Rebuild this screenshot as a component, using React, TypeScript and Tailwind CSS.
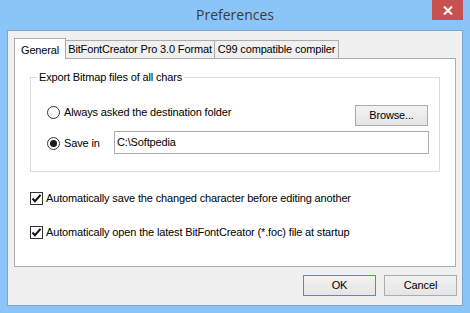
import React from "react";

const font = { fontFamily: "'Liberation Sans', Arial, sans-serif" };

function Radio({ checked }: { checked?: boolean }) {
  return (
    <span className="w-[13px] h-[13px] rounded-full border border-[#333] bg-white flex items-center justify-center shrink-0">
      {checked && <span className="w-[7px] h-[7px] rounded-full bg-[#1a1a1a]" />}
    </span>
  );
}

function Check() {
  return (
    <span className="w-[13px] h-[13px] border border-[#333] bg-white flex items-center justify-center shrink-0">
      <svg width="11" height="11" viewBox="0 0 11 11">
        <path d="M1.5 5.5 L4 8.2 L9.5 1.8" stroke="#111" strokeWidth="2" fill="none" />
      </svg>
    </span>
  );
}

function Btn({ children, def }: { children: React.ReactNode; def?: boolean }) {
  return (
    <div
      className={
        "w-[73px] h-[21px] flex items-center justify-center text-black bg-gradient-to-b from-[#f2f2f2] to-[#e5e5e5] border whitespace-nowrap " +
        (def ? "border-[#3c91e6]" : "border-[#acacac]")
      }
    >
      {children}
    </div>
  );
}

export default function App() {
  return (
    <div className="w-[470px] h-[313px] bg-[#8bc4f6] flex flex-col text-[11px] tracking-[-0.15px]" style={font}>
      <div className="h-[30px] relative flex items-center justify-center shrink-0">
        <span className="text-[14px] tracking-normal text-[#3b3b3b] pb-[2px]" style={{ fontFamily: "'Open Sans', 'Noto Sans', sans-serif" }}>Preferences</span>
        <div className="absolute top-0 right-[7px] w-[31px] h-[20px] bg-[#c75050] flex items-center justify-center">
          <svg width="10" height="9" viewBox="0 0 10 9">
            <path d="M1 0.5 L9 8.5 M9 0.5 L1 8.5" stroke="#fff" strokeWidth="2" />
          </svg>
        </div>
      </div>
      <div className="mx-[7px] mb-[7px] flex-1 border border-[#7fa5cb] bg-[#f0f0f0] flex flex-col px-[6px] pt-[7px]">
        <div className="flex items-end h-[20px] text-black whitespace-nowrap">
          <div className="h-[21px] -mb-px z-10 w-[52px] bg-white border border-[#acacac] border-b-0 flex items-start pl-[6px] pt-[3px]">
            General
          </div>
          <div className="h-[18px] w-[150px] bg-[#f0f0f0] border border-[#acacac] border-b-0 -ml-px flex items-center justify-center">
            BitFontCreator Pro 3.0 Format
          </div>
          <div className="h-[18px] w-[125px] bg-[#f0f0f0] border border-[#acacac] border-b-0 -ml-px flex items-center justify-center">
            C99 compatible compiler
          </div>
        </div>
        <div className="h-[209px] bg-white border border-[#acacac] flex flex-col px-[15px] pt-[18px] text-black whitespace-nowrap">
          <div className="relative border border-[#dcdcdc] h-[95px] flex flex-col pl-[16px] pr-[11px] pt-[20px]">
            <span className="absolute -top-[9px] left-[6px] bg-white px-[2px] leading-[16px]">
              Export Bitmap files of all chars
            </span>
            <div className="flex items-center h-[22px] mt-[3px]">
              <Radio />
              <span className="ml-[4px]">Always asked the destination folder</span>
              <div className="ml-auto mt-[7px]">
                <Btn>Browse...</Btn>
              </div>
            </div>
            <div className="flex items-center h-[23px] mt-[9px]">
              <Radio checked />
              <span className="ml-[4px] w-[50px]">Save in</span>
              <div className="flex-1 h-[23px] border border-[#acacac] flex items-center pl-[2px] -mr-[1px] -mt-[2px]">
                C:\Softpedia
              </div>
            </div>
          </div>
          <div className="flex items-center mt-[20px] h-[13px]">
            <Check />
            <span className="ml-[3px]">Automatically save the changed character before editing another</span>
          </div>
          <div className="flex items-center mt-[21px] h-[13px]">
            <Check />
            <span className="ml-[3px]">Automatically open the latest BitFontCreator (*.foc) file at startup</span>
          </div>
        </div>
        <div className="flex justify-end gap-[8px] mt-[8px] -mr-[1px]">
          <Btn def>OK</Btn>
          <Btn>Cancel</Btn>
        </div>
      </div>
    </div>
  );
}
